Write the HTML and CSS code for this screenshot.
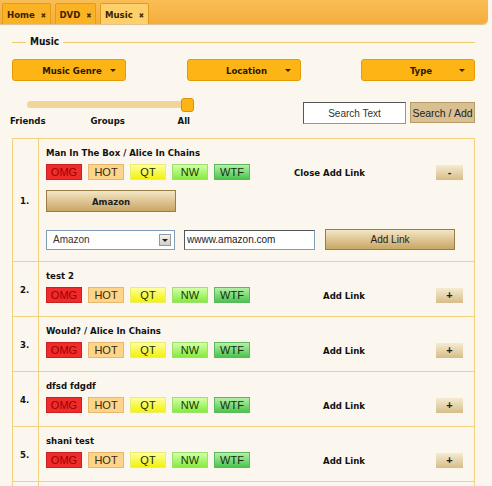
FILE: index.html
```html
<!DOCTYPE html>
<html lang="en">
<head>
    <meta charset="UTF-8">
    <title>Music</title>
    <link rel="stylesheet" href="styles.css">
</head>
<body>
    <div class="tabbar">
        <div class="tab tab-home">Home <span class="x">&#10006;</span></div>
        <div class="tab tab-dvd">DVD <span class="x">&#10006;</span></div>
        <div class="tab tab-music active">Music <span class="x">&#10006;</span></div>
    </div>

    <div class="page">
        <div class="legend"><span>Music</span></div>

        <div class="filters">
            <button class="drop">Music Genre <span class="arrow"></span></button>
            <button class="drop">Location <span class="arrow"></span></button>
            <button class="drop">Type <span class="arrow"></span></button>
        </div>

        <div class="tools">
            <div class="slider">
                <div class="track"><div class="handle"></div></div>
                <div class="ticks">
                    <span>Friends</span>
                    <span class="mid">Groups</span>
                    <span class="end">All</span>
                </div>
            </div>
            <div class="search">
                <input type="text" class="search-input" value="Search Text">
                <button class="btn-beige search-btn">Search / Add</button>
            </div>
        </div>

        <table class="list">
            <tr class="open">
                <td class="num">1.</td>
                <td class="item">
                    <div class="title">Man In The Box / Alice In Chains</div>
                    <div class="line">
                        <div class="tags">
                            <span class="tag omg">OMG</span><span class="tag hot">HOT</span><span class="tag qt">QT</span><span class="tag nw">NW</span><span class="tag wtf">WTF</span>
                        </div>
                        <span class="link-label">Close Add Link</span>
                        <button class="btn-beige small">-</button>
                    </div>
                    <button class="btn-beige store">Amazon</button>
                    <div class="addrow">
                        <div class="select">Amazon <span class="sel-btn"><span class="arrow dark"></span></span></div>
                        <input type="text" class="url" value="wwww.amazon.com">
                        <button class="btn-beige addlink">Add Link</button>
                    </div>
                </td>
            </tr>
            <tr>
                <td class="num">2.</td>
                <td class="item">
                    <div class="title">test 2</div>
                    <div class="line">
                        <div class="tags">
                            <span class="tag omg">OMG</span><span class="tag hot">HOT</span><span class="tag qt">QT</span><span class="tag nw">NW</span><span class="tag wtf">WTF</span>
                        </div>
                        <span class="link-label">Add Link</span>
                        <button class="btn-beige small">+</button>
                    </div>
                </td>
            </tr>
            <tr>
                <td class="num">3.</td>
                <td class="item">
                    <div class="title">Would? / Alice In Chains</div>
                    <div class="line">
                        <div class="tags">
                            <span class="tag omg">OMG</span><span class="tag hot">HOT</span><span class="tag qt">QT</span><span class="tag nw">NW</span><span class="tag wtf">WTF</span>
                        </div>
                        <span class="link-label">Add Link</span>
                        <button class="btn-beige small">+</button>
                    </div>
                </td>
            </tr>
            <tr>
                <td class="num">4.</td>
                <td class="item">
                    <div class="title">dfsd fdgdf</div>
                    <div class="line">
                        <div class="tags">
                            <span class="tag omg">OMG</span><span class="tag hot">HOT</span><span class="tag qt">QT</span><span class="tag nw">NW</span><span class="tag wtf">WTF</span>
                        </div>
                        <span class="link-label">Add Link</span>
                        <button class="btn-beige small">+</button>
                    </div>
                </td>
            </tr>
            <tr>
                <td class="num">5.</td>
                <td class="item">
                    <div class="title">shani test</div>
                    <div class="line">
                        <div class="tags">
                            <span class="tag omg">OMG</span><span class="tag hot">HOT</span><span class="tag qt">QT</span><span class="tag nw">NW</span><span class="tag wtf">WTF</span>
                        </div>
                        <span class="link-label">Add Link</span>
                        <button class="btn-beige small">+</button>
                    </div>
                </td>
            </tr>
            <tr>
                <td class="num"></td>
                <td class="item"><div class="title">&nbsp;</div></td>
            </tr>
        </table>
    </div>
</body>
</html>
```

FILE: styles.css
```css
:root {
    --orange: #fdb515;
    --orange-dark: #e39b05;
    --cream: #fbf7ef;
    --gold-line: #f3d27d;
    --text: #111;
    --label-font: "DejaVu Sans Condensed", "DejaVu Sans", sans-serif;
    --field-font: "Liberation Sans", Arial, sans-serif;
}

body {
    margin: 0;
    background-color: var(--cream);
    font-family: var(--label-font);
    font-size: 9.5px;
    color: var(--text);
    overflow: hidden;
}

/* tabs */
.tabbar {
    width: 488px;
    height: 24px;
    display: flex;
    align-items: flex-end;
    gap: 4px;
    padding-left: 2px;
    box-sizing: border-box;
    background: linear-gradient(#f9be55, #f5ad3c);
    border-bottom-right-radius: 5px;
    box-shadow: 0 1px 1px rgba(180, 110, 0, 0.4);
}

.tab {
    height: 21px;
    line-height: 21px;
    text-align: center;
    background-color: #fbb224;
    border: 1px solid #e29c1a;
    border-bottom: none;
    border-radius: 2px 2px 0 0;
    font-weight: bold;
    font-size: 9.5px;
    color: #3a2200;
    box-sizing: border-box;
}

.tab-home {
    width: 49px;
}

.tab-dvd {
    width: 41px;
}

.tab-music {
    width: 49px;
}

.tab.active {
    background-color: #fed06b;
}

.tab .x {
    font-size: 7px;
    margin-left: 3px;
    color: #4a3000;
}

.page {
    padding: 0 12px;
}

/* legend line */
.legend {
    position: relative;
    width: 463px;
    height: 1px;
    margin-top: 18px;
    background-color: #ecc973;
}

.legend span {
    position: absolute;
    left: 14px;
    top: -7px;
    padding: 0 4px;
    background-color: var(--cream);
    font-size: 10px;
    font-weight: bold;
    line-height: 14px;
}

/* drop downs */
.filters {
    display: flex;
    justify-content: space-between;
    width: 463px;
    margin-top: 16px;
}

.drop {
    width: 114px;
    height: 22px;
    background-color: var(--orange);
    border: 1px solid var(--orange-dark);
    border-radius: 3px;
    font-family: var(--label-font);
    font-size: 9.5px;
    font-weight: bold;
    color: #2a1800;
    padding: 0 0 0 6px;
    position: relative;
}

.arrow {
    position: absolute;
    right: 9px;
    top: 9px;
    width: 0;
    height: 0;
    border-left: 3px solid transparent;
    border-right: 3px solid transparent;
    border-top: 3px solid #3a2200;
}

/* slider + search */
.tools {
    display: flex;
    justify-content: space-between;
    width: 463px;
    margin-top: 17px;
}

.slider {
    width: 190px;
    margin-left: -2px;
}

.track {
    position: relative;
    margin-left: 17px;
    width: 161px;
    height: 7px;
    margin-top: 3px;
    border-radius: 4px;
    background-color: #f2d498;
}

.handle {
    position: absolute;
    right: -6px;
    top: -3px;
    width: 11px;
    height: 12px;
    border-radius: 3px;
    background-color: var(--orange);
    border: 1px solid #d99300;
}

.ticks {
    display: flex;
    margin-top: 7px;
    font-weight: bold;
    font-size: 9.5px;
    width: 180px;
}

.ticks .mid {
    margin-left: 45px;
}

.ticks .end {
    margin-left: auto;
}

.search {
    display: flex;
    gap: 4px;
    margin-top: 4px;
    align-items: flex-start;
}

.search-input {
    width: 103px;
    height: 22px;
    box-sizing: border-box;
    border: 1px solid #7f9db9;
    border-top-color: #555;
    border-left-color: #555;
    background-color: #fff;
    font-family: var(--field-font);
    font-size: 10px;
    text-align: center;
    color: #333;
    padding: 0;
}

.btn-beige {
    background: linear-gradient(#f3e6c6, #dcc28f 55%, #c8a766);
    border: 1px solid #a88c5a;
    font-family: var(--field-font);
    font-size: 10px;
    color: #222;
    padding: 0;
}

.search-btn {
    width: 65px;
    height: 21px;
    font-size: 10.5px;
    background: #d8c092;
    border-color: #b89c68;
}

/* list */
.list {
    width: 463px;
    margin-top: 12px;
    border-collapse: collapse;
    border: 1px solid var(--gold-line);
}

.list td {
    border-top: 1px solid var(--gold-line);
    vertical-align: middle;
    padding: 0;
}

.num {
    width: 26px;
    border-right: 1px solid var(--gold-line);
    font-weight: bold;
    font-size: 9.5px;
    padding-left: 7px !important;
    box-sizing: border-box;
}

.item {
    padding: 8px 0 13px 7px !important;
}

.open .item {
    padding-bottom: 11px !important;
}

.title {
    font-weight: bold;
    font-size: 9.5px;
    line-height: 12px;
}

.line {
    display: flex;
    align-items: center;
    margin-top: 5px;
}

.tags {
    display: flex;
    gap: 6px;
    width: 210px;
}

.tag {
    width: 36px;
    height: 16px;
    flex: none;
    box-sizing: border-box;
    line-height: 14px;
    text-align: center;
    font-family: var(--field-font);
    font-size: 11px;
    border: 1px solid;
}

.omg {
    background-color: #ef2b2b;
    border-color: #c92020;
    color: #9c0000;
}

.hot {
    background-color: #fdd58a;
    border-color: #e8b870;
    color: #3a2a10;
}

.qt {
    background: linear-gradient(#fdff9c, #f2f20c);
    border-color: #e8ef70;
    color: #2a2a00;
}

.nw {
    background: linear-gradient(#d4ffa6, #86ea3c);
    border-color: #9de070;
    color: #163800;
}

.wtf {
    background: linear-gradient(#b4f0a8, #4cc44c);
    border-color: #5cb85c;
    color: #0f3010;
}

.link-label {
    width: 109px;
    text-align: right;
    font-weight: bold;
    font-size: 9.5px;
}

.small {
    width: 27px;
    height: 15px;
    margin-left: 71px;
    font-size: 11px;
    font-weight: bold;
    line-height: 11px;
    border: none;
    background: linear-gradient(#f5ebd2, #d6bd88);
}

.store {
    display: block;
    width: 130px;
    height: 22px;
    margin-top: 10px;
    font-family: var(--label-font);
    font-weight: bold;
    font-size: 9.5px;
    border-color: #9a7c46;
}

.addrow {
    display: flex;
    align-items: center;
    margin-top: 17px;
}

.select {
    position: relative;
    width: 129px;
    height: 20px;
    box-sizing: border-box;
    background-color: #fff;
    border: 1px solid #7f9db9;
    font-family: var(--field-font);
    font-size: 10px;
    line-height: 18px;
    padding-left: 6px;
    color: #333;
}

.sel-btn {
    position: absolute;
    right: 3px;
    top: 3px;
    width: 12px;
    height: 12px;
    background: linear-gradient(#f4f4f0, #cfcfc8);
    border: 1px solid #999;
    box-sizing: border-box;
}

.arrow.dark {
    right: 2px;
    top: 4px;
    border-top-color: #222;
}

.url {
    width: 131px;
    height: 20px;
    box-sizing: border-box;
    margin-left: 9px;
    border: 1px solid #7f9db9;
    border-top-color: #555;
    border-left-color: #555;
    font-family: var(--field-font);
    font-size: 10px;
    padding: 0 2px;
    color: #222;
}

.addlink {
    width: 130px;
    height: 21px;
    margin-left: 10px;
    border-color: #9a7c46;
}
```
